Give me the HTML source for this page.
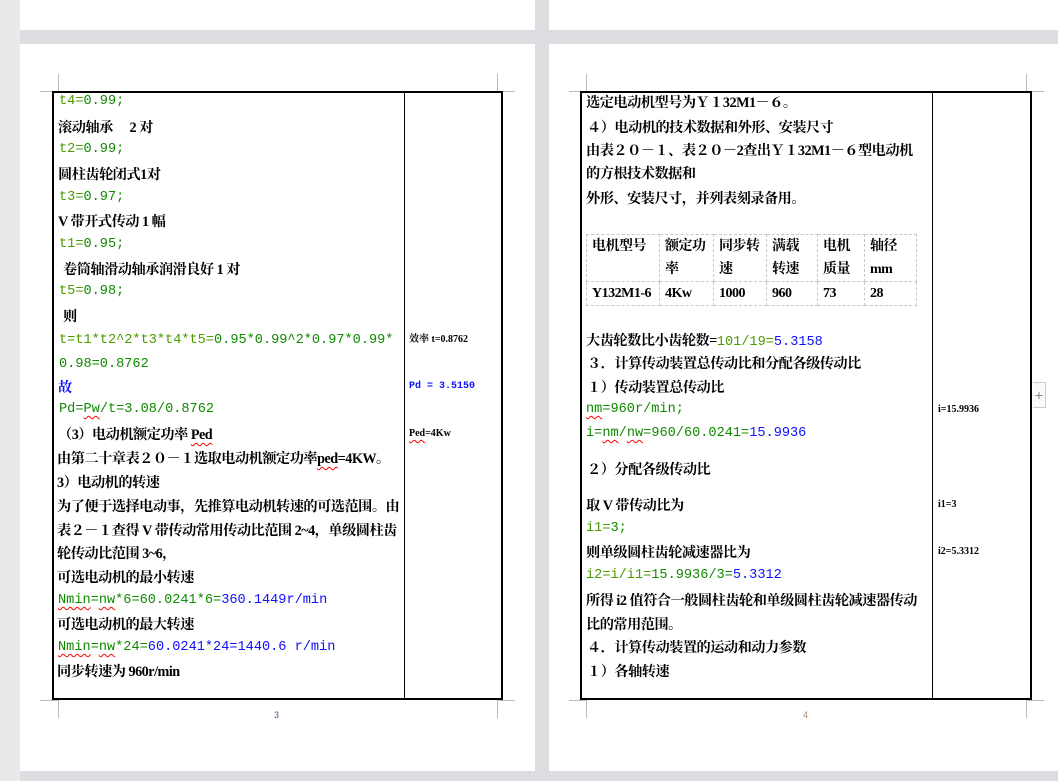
<!DOCTYPE html>
<html><head><meta charset="utf-8"><style>
*{margin:0;padding:0;box-sizing:border-box}
body{width:1058px;height:781px;background:#dcdde0;position:relative;overflow:hidden;font-family:"Liberation Serif","Noto Serif CJK SC",serif}
.pg{position:absolute;background:#fff;top:44px;height:727px}
.top{position:absolute;background:#fff;top:0;height:30px}
.l{position:absolute;white-space:nowrap;line-height:18px;height:18px}
.c{font-size:14.2px;letter-spacing:-0.5px;font-weight:bold;color:#000;font-family:"Liberation Serif","Noto Serif CJK SC",serif}
.g{font-size:13.6px;letter-spacing:0;font-weight:normal;color:#108a00;font-family:"Liberation Mono","DejaVu Sans Mono",monospace}
.b{color:#1010ff}
.y{color:#4a9a00}
.s{font-size:10px;font-weight:bold;color:#000}
.sb{font-size:10px;color:#1010ff;font-family:"Liberation Mono",monospace;font-weight:bold}
.w{text-decoration:underline wavy red;text-decoration-thickness:1px;text-underline-offset:3px}
.vl{position:absolute;background:#000;width:1px}
.hl{position:absolute;background:#000;height:2px}
.m{position:absolute;background:#bbb}
table{position:absolute;border-collapse:collapse;left:586px;top:234px;table-layout:fixed;width:330px}
td{border:1px dashed #c8c8c8;font-size:14px;font-weight:bold;padding:0 0 0 5px;line-height:23px;vertical-align:top;white-space:nowrap;overflow:hidden;font-family:"Liberation Serif","Noto Serif CJK SC",serif;letter-spacing:-0.5px}
</style></head><body>
<div style="position:absolute;left:0;top:0;width:20px;height:781px;background:#e8e9eb"></div>
<div class="top" style="left:20px;width:515px"></div>
<div class="top" style="left:549px;width:509px"></div>
<div class="pg" style="left:20px;width:515px"></div>
<div class="pg" style="left:549px;width:509px"></div>

<div class="m" style="left:58px;top:74px;width:1px;height:17px"></div>
<div class="m" style="left:497px;top:74px;width:1px;height:17px"></div>
<div class="m" style="left:40px;top:91px;width:18px;height:1px"></div>
<div class="m" style="left:497px;top:91px;width:18px;height:1px"></div>
<div class="m" style="left:58px;top:700px;width:1px;height:18px"></div>
<div class="m" style="left:497px;top:700px;width:1px;height:18px"></div>
<div class="m" style="left:40px;top:700px;width:18px;height:1px"></div>
<div class="m" style="left:497px;top:700px;width:18px;height:1px"></div>
<div class="m" style="left:586px;top:74px;width:1px;height:17px"></div>
<div class="m" style="left:1026px;top:74px;width:1px;height:17px"></div>
<div class="m" style="left:569px;top:91px;width:17px;height:1px"></div>
<div class="m" style="left:1026px;top:91px;width:18px;height:1px"></div>
<div class="m" style="left:586px;top:700px;width:1px;height:18px"></div>
<div class="m" style="left:1026px;top:700px;width:1px;height:18px"></div>
<div class="m" style="left:569px;top:700px;width:17px;height:1px"></div>
<div class="m" style="left:1026px;top:700px;width:18px;height:1px"></div>

<div class="hl" style="left:52px;top:91px;width:451px"></div>
<div class="hl" style="left:52px;top:698px;width:451px"></div>
<div class="vl" style="left:52px;top:91px;height:609px;width:2px"></div>
<div class="vl" style="left:404px;top:91px;height:609px"></div>
<div class="vl" style="left:501px;top:91px;height:609px;width:2px"></div>

<div class="hl" style="left:580px;top:91px;width:452px"></div>
<div class="hl" style="left:580px;top:698px;width:452px"></div>
<div class="vl" style="left:580px;top:91px;height:609px;width:2px"></div>
<div class="vl" style="left:932px;top:91px;height:609px"></div>
<div class="vl" style="left:1030px;top:91px;height:609px;width:2px"></div>

<div style="position:absolute;left:1033px;top:382px;width:13px;height:26px;border:1px solid #ccc;border-left:none;background:#fafafa;color:#888;font:14px 'Liberation Sans',sans-serif;text-align:center;line-height:24px">+</div>

<div class="l" style="left:274px;top:710px;font:9px 'Liberation Sans',sans-serif;color:#557">3</div>
<div class="l" style="left:803px;top:710px;font:9px 'Liberation Sans',sans-serif;color:#a86">4</div>

<div class="l g" style="left:59px;top:93px"><span class="y">t4=</span>0.99;</div>
<div class="l c" style="left:58px;top:119px">滚动轴承　 2 对</div>
<div class="l g" style="left:59px;top:141px"><span class="y">t2=</span>0.99;</div>
<div class="l c" style="left:58px;top:166px">圆柱齿轮闭式1对</div>
<div class="l g" style="left:59px;top:189px"><span class="y">t3=</span>0.97;</div>
<div class="l c" style="left:58px;top:213px">V 带开式传动 1 幅</div>
<div class="l g" style="left:59px;top:236px"><span class="y">t1=</span>0.95;</div>
<div class="l c" style="left:63px;top:261px">卷筒轴滑动轴承润滑良好 1 对</div>
<div class="l g" style="left:59px;top:283px"><span class="y">t5=</span>0.98;</div>
<div class="l c" style="left:63px;top:308px">则</div>
<div class="l g" style="left:59px;top:332px"><span class="y">t=t1*t2^2*t3*t4*t5=</span>0.95*0.99^2*0.97*0.99*</div>
<div class="l g" style="left:59px;top:356px">0.98=0.8762</div>
<div class="l c" style="left:58px;top:379px;color:#1010ff">故</div>
<div class="l g" style="left:59px;top:401px">Pd=<span class="w">Pw</span>/t=3.08/0.8762</div>
<div class="l c" style="left:58px;top:426px">（3）电动机额定功率 <span class="w">Ped</span></div>
<div class="l c" style="left:57px;top:450px">由第二十章表２０－１选取电动机额定功率<span class="w">ped</span>=4KW。</div>
<div class="l c" style="left:57px;top:474px">3）电动机的转速</div>
<div class="l c" style="left:57px;top:498px">为了便于选择电动事，先推算电动机转速的可选范围。由</div>
<div class="l c" style="left:57px;top:522px">表２－１查得 V 带传动常用传动比范围 2~4，单级圆柱齿</div>
<div class="l c" style="left:57px;top:545px">轮传动比范围 3~6，</div>
<div class="l c" style="left:57px;top:569px">可选电动机的最小转速</div>
<div class="l g" style="left:58px;top:592px"><span class="w">Nmin</span>=<span class="w">nw</span>*6=60.0241*6=<span class="b">360.1449r/min</span></div>
<div class="l c" style="left:57px;top:616px">可选电动机的最大转速</div>
<div class="l g" style="left:58px;top:639px"><span class="w">Nmin</span>=<span class="w">nw</span>*24=<span class="b">60.0241*24=1440.6 r/min</span></div>
<div class="l c" style="left:57px;top:663px">同步转速为 960r/min</div>

<div class="l s" style="left:409px;top:331px">效率 t=0.8762</div>
<div class="l sb" style="left:409px;top:378px">Pd = 3.5150</div>
<div class="l s" style="left:409px;top:425px"><span class="w">Ped</span>=4Kw</div>

<div class="l c" style="left:586px;top:94px">选定电动机型号为Ｙ１32M1－６。</div>
<div class="l c" style="left:587px;top:119px">４）电动机的技术数据和外形、安装尺寸</div>
<div class="l c" style="left:586px;top:142px">由表２０－１、表２０－2查出Ｙ１32M1－６型电动机</div>
<div class="l c" style="left:586px;top:165px">的方根技术数据和</div>
<div class="l c" style="left:586px;top:190px">外形、安装尺寸，并列表刻录备用。</div>

<table>
<colgroup><col style="width:73px"><col style="width:54px"><col style="width:53px"><col style="width:51px"><col style="width:47px"><col style="width:52px"></colgroup>
<tr style="height:47px"><td>电机型号</td><td>额定功<br>率</td><td>同步转<br>速</td><td>满载<br>转速</td><td>电机<br>质量</td><td>轴径<br>mm</td></tr>
<tr style="height:24px"><td>Y132M1-6</td><td>4Kw</td><td>1000</td><td>960</td><td>73</td><td>28</td></tr>
</table>

<div class="l c" style="left:586px;top:332px">大齿轮数比小齿轮数=<span class="g y">101/19=</span><span class="g b">5.3158</span></div>
<div class="l c" style="left:587px;top:355px">３．计算传动装置总传动比和分配各级传动比</div>
<div class="l c" style="left:587px;top:379px">１）传动装置总传动比</div>
<div class="l g" style="left:586px;top:401px"><span class="w">nm</span>=960r/min;</div>
<div class="l g" style="left:586px;top:425px">i=<span class="w">nm</span>/<span class="w">nw</span>=960/60.0241=<span class="b">15.9936</span></div>
<div class="l c" style="left:587px;top:461px">２）分配各级传动比</div>
<div class="l c" style="left:586px;top:497px">取 V 带传动比为</div>
<div class="l g" style="left:586px;top:520px"><span class="y">i1=</span>3;</div>
<div class="l c" style="left:586px;top:544px">则单级圆柱齿轮减速器比为</div>
<div class="l g" style="left:586px;top:567px"><span class="y">i2=i/i1=</span>15.9936/3=<span class="b">5.3312</span></div>
<div class="l c" style="left:586px;top:592px">所得 i2 值符合一般圆柱齿轮和单级圆柱齿轮减速器传动</div>
<div class="l c" style="left:586px;top:616px">比的常用范围。</div>
<div class="l c" style="left:587px;top:639px">４．计算传动装置的运动和动力参数</div>
<div class="l c" style="left:587px;top:663px">１）各轴转速</div>

<div class="l s" style="left:938px;top:401px">i=15.9936</div>
<div class="l s" style="left:938px;top:496px">i1=3</div>
<div class="l s" style="left:938px;top:543px">i2=5.3312</div>
</body></html>
